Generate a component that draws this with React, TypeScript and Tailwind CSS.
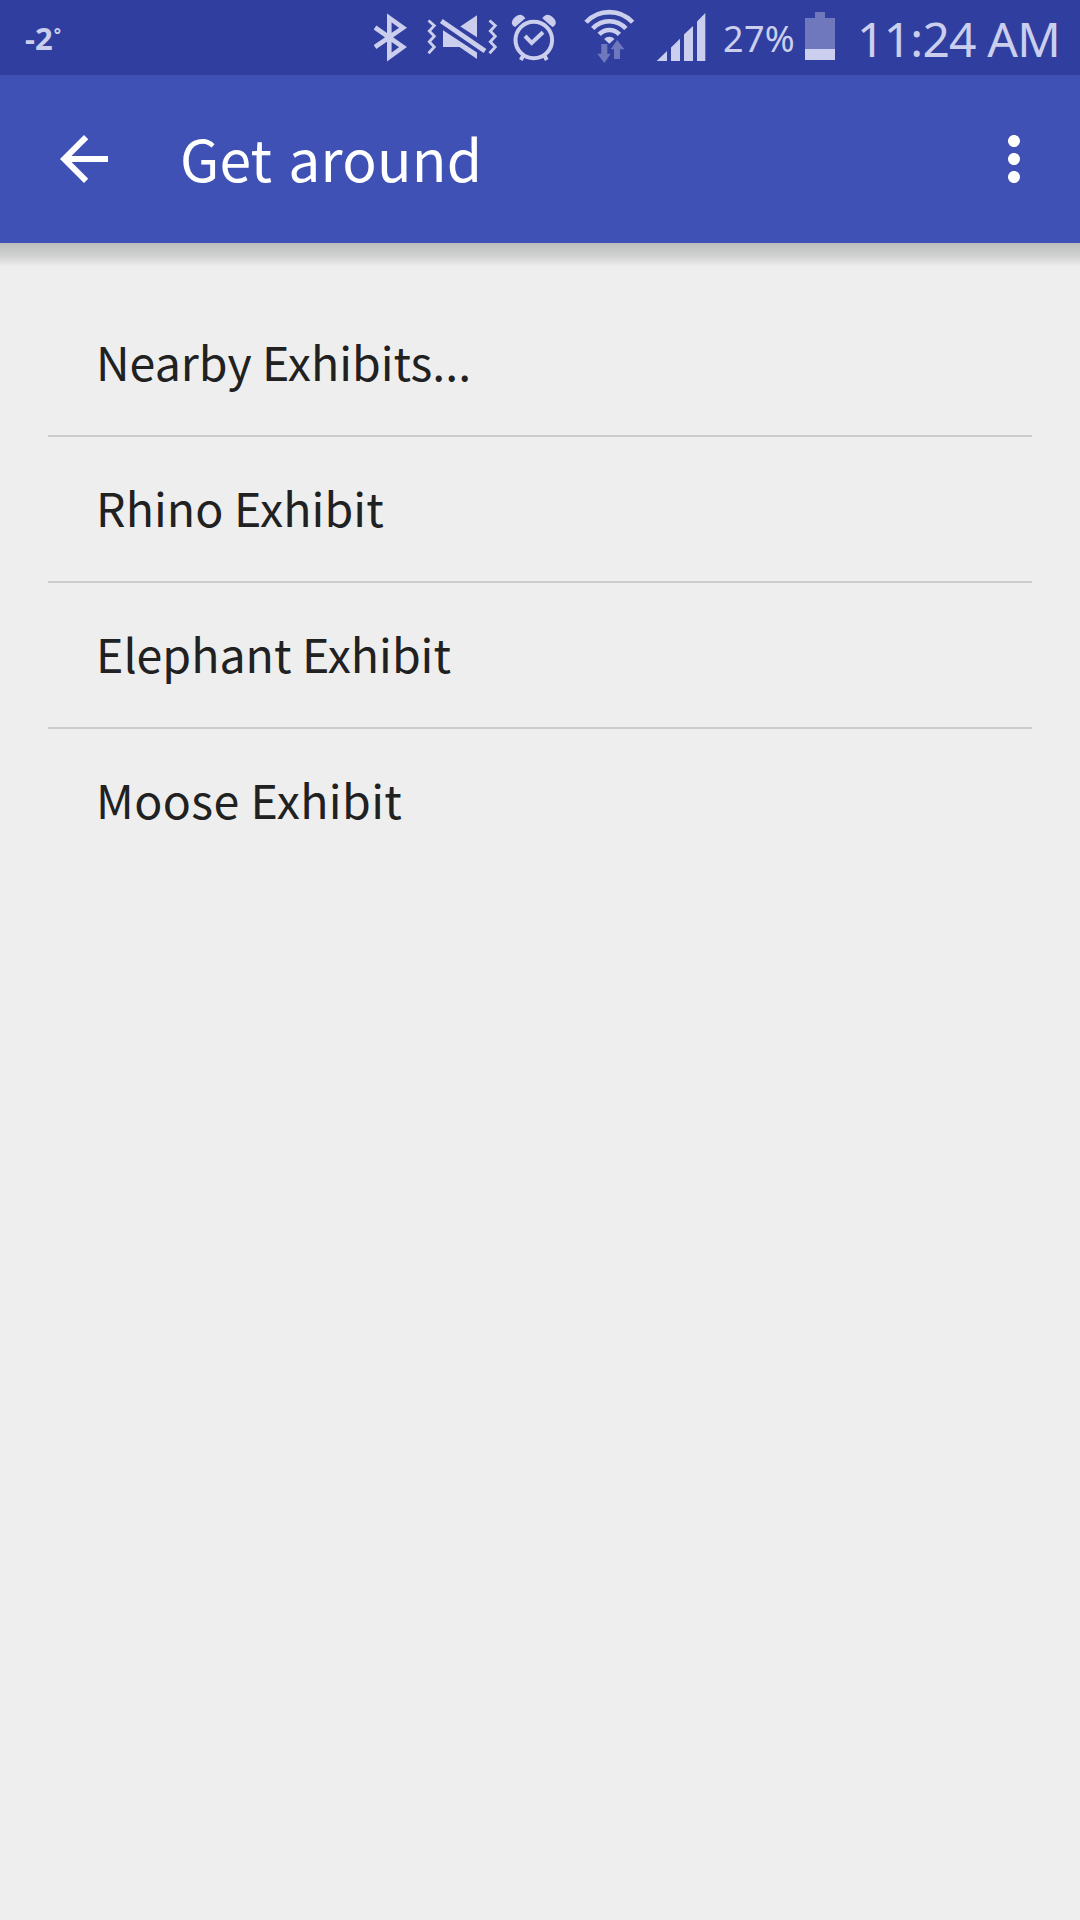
import type { ReactNode } from "react";

const exhibits = [
  { name: "Nearby Exhibits...", tracking: "tracking-normal" },
  { name: "Rhino Exhibit", tracking: "tracking-[0.1px]" },
  { name: "Elephant Exhibit", tracking: "tracking-normal" },
  { name: "Moose Exhibit", tracking: "tracking-[0.4px]" },
];

const BluetoothIcon = () => (
  <svg
    className="ml-1 w-9 h-[75px]"
    viewBox="372 0 36 75"
    fill="none"
    stroke="currentColor"
    strokeWidth="4.6"
  >
    <path d="M375 27.5 L403 47 L389.3 57 V18 L403 27.8 L375 47" />
  </svg>
);

const MuteIcon = () => (
  <svg
    className="ml-[18px] w-[72px] h-[75px]"
    viewBox="426 0 72 75"
    fill="currentColor"
  >
    <path d="M460.3 26.5 L477 15.3 V37.3 Z" />
    <path d="M443 30.3 L477 52.5 V59 L459.5 47 H443 Z" />
    <g fill="none" stroke="currentColor">
      <path d="M441.3 21 L485 51" strokeWidth="4.8" />
      <path
        d="M428.5 20.5 L434.3 25.7 L429.3 31 L434.3 36.3 L429.3 41.7 L434.3 47 L428.5 53.3"
        strokeWidth="2.8"
      />
      <path
        d="M489.5 20.5 L495.3 25.7 L490.3 31 L495.3 36.3 L490.3 41.7 L495.3 47 L489.5 53.3"
        strokeWidth="2.8"
      />
    </g>
  </svg>
);

const AlarmIcon = () => (
  <svg
    className="ml-3 w-12 h-[75px]"
    viewBox="510 0 48 75"
    fill="none"
    stroke="currentColor"
  >
    <circle cx="533.8" cy="40" r="18.3" strokeWidth="4" />
    <path d="M525 36 L531.7 43 L543 32.3" strokeWidth="4" />
    <path
      d="M523.3 55.5 L520.8 60 M544.3 55.5 L546.8 60"
      strokeWidth="4"
    />
    <g fill="currentColor" stroke="none">
      <path d="M515.2 27 L525.3 18.2 Q522 13.2 517.8 15.3 Q512.5 18 511.8 22.5 Q512 25.5 515.2 27 Z" />
      <path d="M552.4 27 L542.3 18.2 Q545.6 13.2 549.8 15.3 Q555.1 18 555.8 22.5 Q555.6 25.5 552.4 27 Z" />
    </g>
  </svg>
);

const WifiIcon = () => (
  <svg
    className="ml-6 w-[54px] h-[75px]"
    viewBox="582 0 54 75"
    fill="currentColor"
  >
    <g fill="none" stroke="currentColor" strokeWidth="4.6">
      <path d="M586 22.3 A31.7 31.7 0 0 1 632.6 22.3" />
      <path d="M592.7 28.5 A22.5 22.5 0 0 1 625.9 28.5" />
      <path d="M599.2 34.4 A13.7 13.7 0 0 1 619.4 34.4" />
    </g>
    <path d="M609.3 43.7 L604.1 39 A7 7 0 0 1 614.5 39 Z" />
    <g className="text-[#7078bd]">
      <path d="M601.3 44 H607.3 V53.7 H610.7 L604.3 63 L597.3 53.7 H601.3 Z" />
      <path d="M614 59 H620 V49.3 H624.3 L617.2 40 L610.7 49.3 H614 Z" />
    </g>
  </svg>
);

const SignalIcon = () => (
  <svg
    className="ml-5 w-[50px] h-[75px]"
    viewBox="656 0 50 75"
    fill="currentColor"
  >
    <path d="M656.7 61 L667 51 V61 Z" />
    <path d="M671 61 V47.5 L680 38.7 V61 Z" />
    <path d="M684 61 V34.5 L693 26 V61 Z" />
    <path d="M697 61 V21.5 L705.3 13 V61 Z" />
  </svg>
);

const BatteryIcon = () => (
  <svg className="w-[30px] h-[75px]" viewBox="805 0 30 75" fill="currentColor">
    <path
      className="text-[#7078bd]"
      d="M815 12 H825 V18 H835 V49 H805 V18 H815 Z"
    />
    <path d="M805 49 H835 V60 H805 Z" />
  </svg>
);

const StatusBar = () => (
  <div className="flex items-center h-[75px] font-['Noto_Sans',sans-serif] text-[#cbcfed] bg-[#303f9f]">
    <div className="flex items-center pl-[25px] w-[368px]">
      <span className="text-[31px] font-bold leading-[76px]">-2</span>
      <span className="pb-1.5 pl-px text-[17px] font-bold leading-none">°</span>
    </div>
    <BluetoothIcon />
    <MuteIcon />
    <AlarmIcon />
    <WifiIcon />
    <SignalIcon />
    <span className="pt-0.5 pl-[17px] w-[99px] text-[36px] tracking-[0.3px] leading-[74px] whitespace-nowrap">
      27%
    </span>
    <BatteryIcon />
    <span className="pt-0.5 pl-[22px] text-[48px] tracking-[-0.8px] leading-[75px] whitespace-nowrap">
      11:24 AM
    </span>
  </div>
);

const IconButton = ({
  label,
  children,
}: {
  label: string;
  children: ReactNode;
}) => (
  <button className="text-white" aria-label={label}>
    <svg className="size-[72px]" viewBox="0 0 24 24" fill="currentColor">
      {children}
    </svg>
  </button>
);

const AppBar = () => (
  <header className="flex items-center pr-[30px] pl-12 h-[168px] bg-[#3f51b5]">
    <IconButton label="Back">
      <path d="M20 11H7.83l5.59-5.59L12 4l-8 8 8 8 1.41-1.41L7.83 13H20v-2z" />
    </IconButton>
    <h1 className="flex-1 pb-1 pl-[60px] text-[57px] [word-spacing:3px] tracking-[0.2px] leading-[80px] text-white">
      Get around
    </h1>
    <IconButton label="More options">
      <path d="M12 8c1.1 0 2-.9 2-2s-.9-2-2-2-2 .9-2 2 .9 2 2 2zm0 2c-1.1 0-2 .9-2 2s.9 2 2 2 2-.9 2-2-.9-2-2-2zm0 6c-1.1 0-2 .9-2 2s.9 2 2 2 2-.9 2-2-.9-2-2-2z" />
    </IconButton>
  </header>
);

export default function App() {
  return (
    <div className="w-[1080px] h-[1920px] font-['Noto_Sans_CJK_SC',sans-serif] bg-[#eeeeee]">
      <StatusBar />
      <AppBar />
      <div className="h-6 bg-linear-to-b from-[#bcbdbd] via-[#cfd0d0] via-50% to-[#eeeeee]" />
      <ul className="px-12 pt-6 divide-y-2 divide-[#cccccc]">
        {exhibits.map(({ name, tracking }) => (
          <li
            key={name}
            className="box-content flex items-center pl-12 h-36 text-[46.5px] text-[#212121]"
          >
            <span className={`pb-1 leading-[60px] ${tracking}`}>{name}</span>
          </li>
        ))}
      </ul>
    </div>
  );
}
